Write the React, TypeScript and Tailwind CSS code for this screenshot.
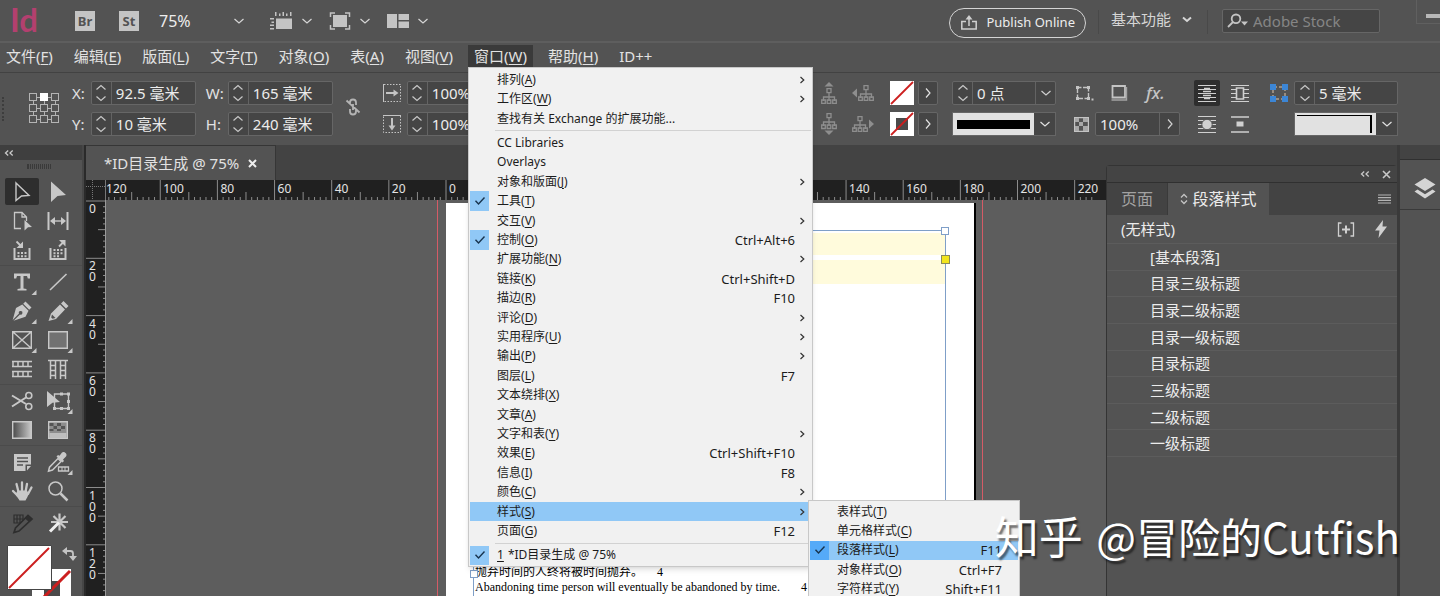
import type { ReactNode } from "react";
import clsx from "clsx";

type MenuEntry = {
  label?: string;
  hotkey?: string;
  shortcut?: string;
  arrow?: boolean;
  checked?: boolean;
  active?: boolean;
  separator?: boolean;
};

const menuBar = [
  { label: "文件", hotkey: "F" },
  { label: "编辑", hotkey: "E" },
  { label: "版面", hotkey: "L" },
  { label: "文字", hotkey: "T" },
  { label: "对象", hotkey: "O" },
  { label: "表", hotkey: "A" },
  { label: "视图", hotkey: "V" },
  { label: "窗口", hotkey: "W", open: true },
  { label: "帮助", hotkey: "H" },
  { label: "ID++" },
];

const windowMenu: MenuEntry[] = [
  { label: "排列", hotkey: "A", arrow: true },
  { label: "工作区", hotkey: "W", arrow: true },
  { label: "查找有关 Exchange 的扩展功能..." },
  { separator: true },
  { label: "CC Libraries" },
  { label: "Overlays" },
  { label: "对象和版面", hotkey: "J", arrow: true },
  { label: "工具", hotkey: "T", checked: true },
  { label: "交互", hotkey: "V", arrow: true },
  { label: "控制", hotkey: "O", shortcut: "Ctrl+Alt+6", checked: true },
  { label: "扩展功能", hotkey: "N", arrow: true },
  { label: "链接", hotkey: "K", shortcut: "Ctrl+Shift+D" },
  { label: "描边", hotkey: "R", shortcut: "F10" },
  { label: "评论", hotkey: "D", arrow: true },
  { label: "实用程序", hotkey: "U", arrow: true },
  { label: "输出", hotkey: "P", arrow: true },
  { label: "图层", hotkey: "L", shortcut: "F7" },
  { label: "文本绕排", hotkey: "X" },
  { label: "文章", hotkey: "A" },
  { label: "文字和表", hotkey: "Y", arrow: true },
  { label: "效果", hotkey: "E", shortcut: "Ctrl+Shift+F10" },
  { label: "信息", hotkey: "I", shortcut: "F8" },
  { label: "颜色", hotkey: "C", arrow: true },
  { label: "样式", hotkey: "S", arrow: true, active: true },
  { label: "页面", hotkey: "G", shortcut: "F12" },
  { separator: true },
  { label: "*ID目录生成 @ 75%", checked: true },
];

const styleMenu: MenuEntry[] = [
  { label: "表样式", hotkey: "T" },
  { label: "单元格样式", hotkey: "C" },
  { label: "段落样式", hotkey: "L", shortcut: "F11", checked: true, active: true },
  { label: "对象样式", hotkey: "O", shortcut: "Ctrl+F7" },
  { label: "字符样式", hotkey: "Y", shortcut: "Shift+F11" },
];

const paragraphStyles = [
  "[基本段落]",
  "目录三级标题",
  "目录二级标题",
  "目录一级标题",
  "目录标题",
  "三级标题",
  "二级标题",
  "一级标题",
];

/* ---------- small shared pieces ---------- */

function Chevron({ dir = "down", bold = false }: { dir?: "down" | "right"; bold?: boolean }) {
  return (
    <svg
      width="12"
      height="12"
      viewBox="0 0 12 12"
      fill="none"
      stroke="currentColor"
      strokeWidth={bold ? 2 : 1.2}
      className={clsx("shrink-0", dir === "right" && "-rotate-90")}
    >
      <path d={bold ? "M2 4.5l4 3.5 4-3.5" : "M1.500 4l4.500 4 4.500-4"} />
    </svg>
  );
}

function Hotkey({ label, hotkey }: { label?: string; hotkey?: string }) {
  return (
    <>
      {label}
      {hotkey && (
        <>
          (<span className="underline underline-offset-2">{hotkey}</span>)
        </>
      )}
    </>
  );
}

function Spinner() {
  return (
    <span className="flex w-5 shrink-0 items-center justify-center border-r border-[#636363] text-[#c8c8c8]">
      <svg width="12" height="20" viewBox="0 0 12 20" fill="none" stroke="currentColor" strokeWidth="1.2">
        <path d="M1.500 6.500l4.500-4 4.500 4M1.500 13.500l4.500 4 4.500-4" />
      </svg>
    </span>
  );
}

function Field({
  id,
  label,
  value,
  spin = true,
  drop,
  className,
}: {
  id: string;
  label: string;
  value: string;
  spin?: boolean;
  drop?: "down" | "right";
  className: string;
}) {
  return (
    <div className={clsx("flex h-6 border border-[#666] bg-[#454545] rounded-xs", className)}>
      {spin && <Spinner />}
      <input
        id={id}
        aria-label={label}
        defaultValue={value}
        className="w-0 min-w-0 flex-1 bg-transparent pl-1 text-[15px] leading-[22px] text-[#ececec] outline-none"
      />
      {drop && (
        <button
          aria-label={label + " ▾"}
          className="flex w-5 shrink-0 items-center justify-center border-l border-[#636363] text-[#d0d0d0]"
        >
          <Chevron dir={drop} />
        </button>
      )}
    </div>
  );
}

function IconButton({ label, children, className }: { label: string; children: ReactNode; className?: string }) {
  return (
    <button aria-label={label} className={clsx("flex shrink-0 items-center justify-center", className)}>
      {children}
    </button>
  );
}

function Divider() {
  return <span className="h-6 w-px shrink-0 bg-[#494949]" />;
}

/* ---------- menus ---------- */

function MenuRow({ entry, children }: { entry: MenuEntry; children?: ReactNode }) {
  if (entry.separator) {
    return (
      <li className="flex h-[5px] items-center pl-[25px]">
        <span className="h-px w-full bg-[#d2d2d2]" />
      </li>
    );
  }
  return (
    <li className={clsx("relative flex flex-1", entry.active && "bg-[#90c8f6]")}>
      <button className="flex w-full items-center pr-1 text-left text-xs text-[#1c1c1c]">
        <span
          className={clsx(
            "mr-2 flex w-[19px] items-center justify-center self-stretch",
            entry.checked && (entry.active ? "bg-[#55aaf8]" : "bg-[#90c8f6]"),
          )}
        >
          {entry.checked && (
            <svg width="12" height="10" viewBox="0 0 12 10" fill="none" stroke="#17334d" strokeWidth="1.4">
              <path d="M1.500 4.800l3 3.200L10.500 1.500" />
            </svg>
          )}
        </span>
        <span className="flex-1 leading-4 whitespace-nowrap">
          {entry.label?.startsWith("*ID") && <span className="mr-1 underline underline-offset-2">1</span>}
          <Hotkey label={entry.label} hotkey={entry.hotkey} />
        </span>
        <span className="text-[13px] leading-4">{entry.shortcut}</span>
        <span className="flex w-3 justify-end">
          {entry.arrow && (
            <svg width="8" height="10" viewBox="0 0 8 10" fill="none" stroke="#333" strokeWidth="1.200">
              <path d="M1.500 2L4.800 5 1.500 8" />
            </svg>
          )}
        </span>
      </button>
      {children}
    </li>
  );
}

function WindowMenu() {
  return (
    <ul className="absolute top-full left-0 z-20 flex h-[500px] w-[345px] flex-col border border-[#c8c8c8] bg-[#f1f1f1] p-px pt-0.5 shadow-md">
      {windowMenu.map((entry, i) => (
        <MenuRow key={i} entry={entry}>
          {entry.active && (
            <ul className="absolute -top-0.5 left-full -ml-[3px] flex h-[101px] w-[212px] flex-col border border-[#c8c8c8] bg-[#f1f1f1] p-px">
              {styleMenu.map((sub) => (
                <MenuRow key={sub.label} entry={sub} />
              ))}
            </ul>
          )}
        </MenuRow>
      ))}
    </ul>
  );
}

/* ---------- top bars ---------- */

function AppBar() {
  return (
    <header className="flex h-[43px] shrink-0 items-start border-b-2 border-[#5e5e5e] text-[#d6d6d6]">
      <div className="flex h-full items-center pl-2.5">
        <span className="w-[65px] pb-1 font-['Lato'] text-[33px] leading-9 font-bold text-[#b3406f]">Id</span>
        <button className="size-5 bg-[#c4c4c4] text-center text-[13px] leading-5 font-bold text-[#535353]">Br</button>
        <button className="ml-6 size-5 bg-[#c4c4c4] text-center text-[13px] leading-5 font-bold text-[#535353]">
          St
        </button>
        <label className="ml-5 flex items-center">
          <span className="sr-only">缩放</span>
          <select className="h-8 w-[74px] appearance-none bg-transparent text-base leading-8 text-[#ededed] outline-none">
            <option>75%</option>
          </select>
          <Chevron />
        </label>
        <span className="mx-3">
          <Divider />
        </span>
        <IconButton label="视图选项" className="gap-2">
          <svg width="24" height="20" viewBox="0 0 24 20" fill="#c4c4c4">
            <path d="M7 7.500h16V18H7z" />
            <path d="M6 1h1.500v4H6zM10 2.500h1.500V5H10zM13.500 1H15v4h-1.500zM17 2.500h1.500V5H17zM21 1h1.500v4H21zM1 7h4v1.500H1zM2.500 10.500H5V12H2.500zM1 13.500h4V15H1zM1 17h4v1.500H1z" />
          </svg>
          <Chevron />
        </IconButton>
        <IconButton label="屏幕模式" className="ml-4 gap-2">
          <svg width="22" height="20" viewBox="0 0 22 20" fill="#c4c4c4">
            <path d="M4 4h14v12H4z" />
            <path d="M1.500 6V2H6M16 2h4.500v4M20.500 14v4H16M6 18H1.500v-4" fill="none" stroke="#c4c4c4" strokeWidth="1.500" />
          </svg>
          <Chevron />
        </IconButton>
        <IconButton label="排列文档" className="ml-4 gap-2">
          <svg width="22" height="14" viewBox="0 0 22 14" fill="#c4c4c4">
            <path d="M0 0h10v14H0zM11.500 0H22v6H11.500zM11.500 7.500H22V14H11.500z" />
          </svg>
          <Chevron />
        </IconButton>
      </div>
      <div className="ml-auto flex items-start">
        <button className="mt-2 flex h-[30px] items-center gap-2 rounded-full border border-[#d4d4d4] px-2.5 text-[13px] text-[#ededed]">
          <svg width="18" height="18" viewBox="0 0 18 18" fill="none" stroke="#d0d0d0" strokeWidth="1.500">
            <path d="M6 7.500H1.800V15h14.400V7.500H12M9 12V3" />
            <path d="M5.500 5.500L9 1l3.500 4.500z" fill="#d0d0d0" stroke="none" />
          </svg>
          Publish Online
        </button>
        <span className="mx-3 mt-2.5 flex">
          <Divider />
        </span>
        <button className="mt-[7px] flex items-center gap-2.5 text-[15px] leading-6">
          基本功能
          <Chevron bold />
        </button>
        <span className="mx-3.5 mt-2.5 flex">
          <Divider />
        </span>
        <label className="mt-[9px] flex h-6 w-[158px] items-center rounded-xs border border-[#666] bg-[#454545] pl-1">
          <svg width="22" height="16" viewBox="0 0 22 16" fill="none" stroke="#c4c4c4" strokeWidth="1.800">
            <circle cx="9" cy="5.800" r="4.300" />
            <path d="M6 9L1 14" />
            <path d="M14 8.500h7l-3.500 4z" fill="#c4c4c4" stroke="none" />
          </svg>
          <span className="sr-only">Adobe Stock</span>
          <input
            placeholder="Adobe Stock"
            className="h-[22px] w-0 flex-1 bg-transparent pl-1 text-[15px] leading-[22px] outline-none placeholder:text-[#858585]"
          />
        </label>
        <button
          aria-label="最小化"
          className="ml-9 flex h-6 w-6 items-center justify-end border-b border-l border-[#606060] pt-2"
        >
          <span className="h-1 w-3.5 bg-[#b8b8b8]" />
        </button>
      </div>
    </header>
  );
}

function MenuBar() {
  return (
    <nav className="flex h-[30px] shrink-0 items-start gap-[9px] border-b border-[#424242] pt-0.5 text-[15px] leading-[22px] text-[#e2e2e2]">
      {menuBar.map((m) => (
        <div key={m.label} className="relative">
          <button className={clsx("block px-1.5 whitespace-nowrap", m.open && "bg-[#3a3a3a]")}>
            <Hotkey label={m.label} hotkey={m.hotkey} />
          </button>
          {m.open && <WindowMenu />}
        </div>
      ))}
    </nav>
  );
}

/* ---------- control strip ---------- */

const treePath = "M8 4v5M2.500 13V9h11v4M8 9v4M6 .700h4v4H6zM.700 12h3.600v3.500H.700zM6.200 12h3.600v3.500H6.200zM11.700 12h3.600v3.500h-3.600z";

function TreeIcon({ arrow }: { arrow: "up" | "down" | "left" | "right" }) {
  const vertical = arrow === "up" || arrow === "down";
  const head = {
    up: "M8 0l4.500 4.500h-9z",
    down: "M8 22l4.500-4.500h-9z",
    left: "M0 8l5-4.500v9z",
    right: "M22 8l-5-4.500v9z",
  }[arrow];
  const shift = { up: "translate(0 6)", down: "translate(0 0)", left: "translate(6 0)", right: "translate(0 0)" }[arrow];
  return (
    <svg width={vertical ? 16 : 22} height={vertical ? 22 : 16} viewBox={vertical ? "0 0 16 22" : "0 0 22 16"}>
      <path d={head} fill="#8e8e8e" />
      <path d={treePath} transform={shift} fill="none" stroke="#8e8e8e" strokeWidth="1.300" />
    </svg>
  );
}

function ReferencePoint() {
  const cells = [0, 11, 22];
  return (
    <svg width="31" height="31" viewBox="0 0 31 31" fill="none" stroke="#b4b4b4">
      <path d="M8 4.500h15M8 15.500h15M8 26.500h15M4.500 8v15M15.500 8v15M26.500 8v15" />
      {cells.map((y) =>
        cells.map((x) => (
          <rect
            key={x + "-" + y}
            x={x + 0.5}
            y={y + 0.5}
            width="7"
            height="7"
            fill={x === 11 && y === 0 ? "#fff" : "#535353"}
            stroke={x === 11 && y === 0 ? "#fff" : "#b4b4b4"}
          />
        )),
      )}
    </svg>
  );
}

function ScaleIcon({ turn = false }: { turn?: boolean }) {
  return (
    <svg width="18" height="18" viewBox="0 0 18 18" fill="none" stroke="#c4c4c4" className={clsx(turn && "rotate-90")}>
      <path d="M.5 0v18" />
      <path d="M1 .5h16.500v17H1" strokeDasharray="1.500 1.500" />
      <path d="M3 9h9" strokeWidth="2" />
      <path d="M10.500 5.500L15.500 9l-5 3.500z" fill="#c4c4c4" stroke="none" />
    </svg>
  );
}

function WrapIcon({ kind }: { kind: "none" | "box" | "shape" | "jump" }) {
  return (
    <svg width="18" height="17" viewBox="0 0 18 17" fill="none" stroke="#d0d0d0">
      {kind === "jump" ? (
        <path d="M0 1h18M0 16h18" strokeWidth="1.600" />
      ) : (
        <path d="M0 .500h18M0 4.500h18M0 8.500h18M0 12.500h18M0 16.500h18" />
      )}
      {kind === "none" && <path d="M6 3.500h6M5 6.500h8M5 10.500h8M6 13.500h6" strokeWidth="1.600" />}
      {kind === "box" && <path d="M5.500 3h7v11h-7z" fill="#535353" strokeWidth="1.600" />}
      {kind === "shape" && <circle cx="9" cy="8.500" r="5.200" fill="#d0d0d0" stroke="#535353" />}
      {kind === "jump" && <path d="M5.500 5.500h7v5h-7z" fill="#d0d0d0" stroke="none" />}
    </svg>
  );
}

function FillSwatch({ hollow = false }: { hollow?: boolean }) {
  return (
    <svg width="24" height="24" viewBox="0 0 24 24">
      <path d="M0 0h24v24H0z" fill="#fff" />
      {hollow && <path d="M6 6h12v12H6z" fill="#4a4a4a" />}
      <path d="M1 23L23 1" stroke="#cc1f1f" strokeWidth="1.800" />
    </svg>
  );
}

const pair = "grid grid-rows-[24px_24px] items-center gap-y-[7px]";

function ControlBar() {
  return (
    <section className="flex h-[72px] shrink-0 items-start pt-2 text-[15px] text-[#e2e2e2]">
      <span className="mt-4 ml-0.5 h-6 w-0.5 border-l-2 border-dotted border-[#3d3d3d]" />
      <span className="mt-3 ml-[25px]">
        <ReferencePoint />
      </span>
      <div className={clsx(pair, "ml-3 leading-6")}>
        <label htmlFor="pos-x">X:</label>
        <label htmlFor="pos-y">Y:</label>
      </div>
      <div className={clsx(pair, "ml-1.5")}>
        <Field id="pos-x" label="X" value="92.5 毫米" className="w-[105px]" />
        <Field id="pos-y" label="Y" value="10 毫米" className="w-[105px]" />
      </div>
      <div className={clsx(pair, "ml-2.5 w-[22px] leading-6")}>
        <label htmlFor="size-w">W:</label>
        <label htmlFor="size-h">H:</label>
      </div>
      <div className={pair}>
        <Field id="size-w" label="W" value="165 毫米" className="w-[105px]" />
        <Field id="size-h" label="H" value="240 毫米" className="w-[105px]" />
      </div>
      <IconButton label="约束比例" className="mt-4 ml-2.5">
        <svg width="20" height="20" viewBox="0 0 20 20" fill="none" stroke="#b4b4b4" strokeWidth="1.800">
          <path d="M7 7V5.500a3 3 0 0 1 6 0V8M7 12v2.500a3 3 0 0 0 6 0V13M10 7v6M3.500 3.500l13 12" />
        </svg>
      </IconButton>
      <div className={clsx(pair, "ml-5")}>
        <ScaleIcon />
        <ScaleIcon turn />
      </div>
      <div className={clsx(pair, "ml-1.5")}>
        <Field id="scale-x" label="X 缩放" value="100%" className="w-[84px]" />
        <Field id="scale-y" label="Y 缩放" value="100%" className="w-[84px]" />
      </div>

      <div className={clsx(pair, "ml-auto grid-cols-[18px_22px] justify-items-center gap-x-3.5")}>
        <TreeIcon arrow="up" />
        <TreeIcon arrow="left" />
        <TreeIcon arrow="down" />
        <TreeIcon arrow="right" />
      </div>
      <div className={clsx(pair, "ml-4 grid-cols-[24px_20px] gap-x-1")}>
        <FillSwatch />
        <button aria-label="填色" className="flex h-6 items-center justify-center rounded-xs border border-[#666] bg-[#454545]">
          <Chevron dir="right" />
        </button>
        <FillSwatch hollow />
        <button aria-label="描边" className="flex h-6 items-center justify-center rounded-xs border border-[#666] bg-[#454545]">
          <Chevron dir="right" />
        </button>
      </div>
      <div className={clsx(pair, "ml-3.5")}>
        <Field id="weight" label="粗细" value="0 点" drop="down" className="w-[104px]" />
        <button aria-label="描边类型" className="flex h-6 w-[104px] border border-[#666] bg-[#454545]">
          <span className="flex h-full flex-1 items-center bg-[#e1e1e1] px-1">
            <span className="h-[9px] w-full bg-black" />
          </span>
          <span className="flex h-full w-[21px] items-center justify-center">
            <Chevron />
          </span>
        </button>
      </div>
      <div className="ml-[18px] flex flex-col gap-[7px]">
        <div className="flex h-6 items-center">
          <IconButton label="角选项">
            <svg width="20" height="18" viewBox="0 0 20 18" fill="none" stroke="#c4c4c4">
              <path d="M3.500 3.500h11v11h-11z" strokeWidth="1.400" strokeDasharray="4 1.500" />
              <path d="M2 2h3v3H2zM13 2h3v3h-3zM2 13h3v3H2zM13 13h3v3h-3z" fill="#c4c4c4" stroke="none" />
              <path d="M17.500 14.500h2v2h-2z" fill="#c4c4c4" stroke="none" />
            </svg>
          </IconButton>
          <IconButton label="投影" className="ml-4">
            <svg width="18" height="18" viewBox="0 0 18 18" fill="none" stroke="#c4c4c4">
              <path d="M2.500 2h12.500v11.500H2.500z" strokeWidth="1.800" />
              <path d="M1.500 16h15V3" strokeWidth="1.400" stroke="#a4a4a4" />
            </svg>
          </IconButton>
          <button className="ml-[18px] text-[17px] leading-6 font-medium text-[#c4c4c4] italic">fx.</button>
        </div>
        <div className="flex h-6 items-center gap-1.5">
          <svg width="15" height="15" viewBox="0 0 15 15" fill="#a8a8a8">
            <path d="M.600.600h13.800v13.800H.600z" fill="none" stroke="#c4c4c4" strokeWidth="1.200" />
            <path d="M1 1h4v4H1zM9 1h5v4H9zM5 5h4v4H5zM1 9h4v5H1zM9 9h5v5H9z" />
          </svg>
          <Field id="opacity" label="不透明度" value="100%" spin={false} drop="right" className="w-[85px]" />
        </div>
      </div>
      <div className={clsx(pair, "ml-3.5 grid-cols-[26px_26px] justify-items-center gap-x-[7px]")}>
        <IconButton label="无文本绕排" className="size-[26px] rounded-xs bg-[#2e2e2e]">
          <WrapIcon kind="none" />
        </IconButton>
        <IconButton label="沿定界框绕排">
          <WrapIcon kind="box" />
        </IconButton>
        <IconButton label="沿对象形状绕排">
          <WrapIcon kind="shape" />
        </IconButton>
        <IconButton label="上下型绕排">
          <WrapIcon kind="jump" />
        </IconButton>
      </div>
      <svg width="18" height="18" viewBox="0 0 18 18" className="mt-[3px] ml-[17px] shrink-0">
        <path d="M3 3h12v12H3z" fill="none" stroke="#b0a090" strokeWidth="1.500" strokeDasharray="4 2" />
        <path d="M0 0h6v6H0zM12 0h6v6h-6zM0 12h6v6H0zM12 12h6v6h-6z" fill="#3c86d6" />
      </svg>
      <div className={clsx(pair, "mr-[42px] ml-1.5")}>
        <Field id="corner" label="转角大小" value="5 毫米" className="w-[104px]" />
        <button aria-label="转角形状" className="flex h-6 w-[104px] border border-[#666] bg-[#454545]">
          <span className="flex h-full flex-1 items-end bg-[#e1e1e1] pr-1 pb-0.5 pl-0.5">
            <span className="h-[18px] w-full border-t border-r-2 border-black" />
          </span>
          <span className="flex h-full w-[21px] items-center justify-center">
            <Chevron />
          </span>
        </button>
      </div>
    </section>
  );
}

/* ---------- toolbox ---------- */

const corner = "M24.500 18v5h-5z";

const toolGroups: { name: string; icon: ReactNode; flyout?: boolean; selected?: boolean }[][] = [
  [
    { name: "选择工具", selected: true, icon: <path d="M6 3l13 12.500-7.500.500L6 20.500z" fill="none" stroke="#c8c8c8" strokeWidth="1.400" /> },
    { name: "直接选择工具", icon: <path d="M5 1.500l15 13.500-8.500 1L5 22z" /> },
    {
      name: "页面工具",
      icon: (
        <>
          <path d="M11 19.500H4.500v-16h7.500l4.500 4.500v4M12 3.500V8h4.500" fill="none" stroke="#c8c8c8" strokeWidth="1.300" />
          <path d="M14.500 11l7.500 7-4 .300-3.500 3.200z" />
        </>
      ),
    },
    {
      name: "间隙工具",
      icon: (
        <>
          <path d="M2.500 3v18M21.500 3v18" stroke="#c8c8c8" strokeWidth="2" />
          <path d="M6 12h12" stroke="#c8c8c8" strokeWidth="1.400" />
          <path d="M9 8l-5 4 5 4zM15 8l5 4-5 4z" />
        </>
      ),
    },
    {
      name: "内容收集器工具",
      icon: (
        <>
          <path d="M4.500 10v11h15V10" fill="none" stroke="#c8c8c8" strokeWidth="2" />
          <path d="M7.500 14h2v2h-2zM11 14h2v2h-2zM14.500 14h2v2h-2zM7.500 17.300h2v2h-2zM11 17.300h2v2h-2zM14.500 17.300h2v2h-2zM13 3.500V10H6.500z" />
          <path d="M6.500 3.500l4 4" stroke="#c8c8c8" strokeWidth="1.800" />
        </>
      ),
    },
    {
      name: "内容置入器工具",
      icon: (
        <>
          <path d="M4.500 10v11h15V10" fill="none" stroke="#c8c8c8" strokeWidth="2" />
          <path d="M7.500 11h2v2h-2zM11 11h2v2h-2zM14.500 11h2v2h-2zM7.500 14.300h2v2h-2zM11 14.300h2v2h-2zM14.500 14.300h2v2h-2zM7.500 17.300h2v2h-2zM11 17.300h2v2h-2zM13 2h6.500v6.500z" />
          <path d="M13 8.500l4-4" stroke="#c8c8c8" strokeWidth="1.800" />
        </>
      ),
    },
  ],
  [
    { name: "文字工具", flyout: true, icon: <path d="M4 3.500h16v5h-2.200L17 6h-3.500v12.500l3 .500v1.500h-9V19l3-.500V6H7l-.800 2.500H4z" /> },
    { name: "直线工具", icon: <path d="M4 20L20.500 4" stroke="#c8c8c8" strokeWidth="1.600" /> },
    {
      name: "钢笔工具",
      flyout: true,
      icon: (
        <path d="M15.500 2.500l6 6-2.300 2.300-6-6zM12.300 5.500l6.200 6.200-3 6L3.500 21.800 10 15.500a1.800 1.800 0 1 0-1-1L2.700 21 6 9z" />
      ),
    },
    {
      name: "铅笔工具",
      flyout: true,
      icon: (
        <>
          <path d="M17.500 2l5 5-2.500 2.500-5-5zM14 5.500l5 5-9 9.500-7.500 2L5 14.500z" />
          <path d="M6 15.500l3.500 3.500-3 .800-1.300-1.300z" fill="#535353" />
        </>
      ),
    },
    {
      name: "矩形框架工具",
      flyout: true,
      icon: <path d="M2.700 3.700h18.600v16.600H2.700zM3 4l18 16M21 4L3 20" fill="none" stroke="#c8c8c8" strokeWidth="1.400" />,
    },
    {
      name: "矩形工具",
      flyout: true,
      icon: <path d="M2.700 3.700h18.600v16.600H2.700z" fill="#727272" stroke="#c8c8c8" strokeWidth="1.400" />,
    },
    {
      name: "水平网格工具",
      icon: (
        <path
          d="M2 4.500h20M2 9.500h20M2 14.500h20M2 19.500h20M3 4v6M8 4v6M13 4v6M18 4v6M3 14v6M8 14v6M13 14v6M18 14v6"
          fill="none"
          stroke="#c8c8c8"
          strokeWidth="1.500"
        />
      ),
    },
    {
      name: "垂直网格工具",
      icon: (
        <path
          d="M2 3.500h20M4.500 3v19M9.500 3v19M14.500 3v19M19.500 3v19M4 8.500h6M4 13.500h6M4 18.500h6M14 8.500h6M14 13.500h6M14 18.500h6"
          fill="none"
          stroke="#c8c8c8"
          strokeWidth="1.500"
        />
      ),
    },
  ],
  [
    {
      name: "剪刀工具",
      icon: (
        <>
          <path d="M2 6.500l14 8.500M2 17.500l14-9" stroke="#c8c8c8" strokeWidth="2" />
          <circle cx="18.800" cy="6.500" r="3" fill="none" stroke="#c8c8c8" strokeWidth="1.600" />
          <circle cx="18.800" cy="17.500" r="3" fill="none" stroke="#c8c8c8" strokeWidth="1.600" />
        </>
      ),
    },
    {
      name: "自由变换工具",
      flyout: true,
      icon: (
        <>
          <path d="M8.500 5h14v14.500h-14z" fill="none" stroke="#c8c8c8" strokeWidth="1.400" />
          <path d="M7 18h3v3H7zM21 18h3v3h-3zM21 3.500h3v3h-3zM14 18h3v3h-3zM21 11h3v3h-3zM14 3.500h3v3h-3zM1 2l13 11-7.500.800L1 18z" />
        </>
      ),
    },
    { name: "渐变色板工具", icon: <path d="M2.700 3.700h18.600v16.600H2.700z" fill="url(#ramp)" stroke="#c8c8c8" strokeWidth="1.400" /> },
    {
      name: "渐变羽化工具",
      icon: (
        <>
          <path d="M2.700 3.700h18.600v16.600H2.700z" fill="#8d8d8d" stroke="#c8c8c8" strokeWidth="1.400" />
          <path d="M3.500 5h4v3h-4zM11 5h4v3h-4zM7.500 8h3.500v3H7.500zM15 8h4v3h-4zM3.500 11h4v2h-4zM11 11h4v2h-4z" fill="#555" />
          <path d="M3.500 15h17v5h-17z" fill="#bdbdbd" />
        </>
      ),
    },
  ],
  [
    {
      name: "附注工具",
      icon: (
        <>
          <path d="M4 4h17v10.500h-5.500V21H4zM17 16h4l-4 4.500z" />
          <path d="M7 8h11M7 11.500h11M7 15h6" stroke="#535353" strokeWidth="1.400" />
        </>
      ),
    },
    {
      name: "颜色主题工具",
      flyout: true,
      icon: (
        <>
          <path d="M16 2.500c2-2 6 1.500 4 4l-3 3 1 1.500-1.500 1.500-6-6L12 5l1.500.800z" />
          <path d="M12 8.500l3 3L6.500 20l-4 1.200 1-4z" fill="none" stroke="#c8c8c8" strokeWidth="1.500" />
          <path d="M12.500 17h10v4h-10z" fill="#535353" stroke="#c8c8c8" strokeWidth="1.300" />
          <path d="M16 17v4M19 17v4" stroke="#c8c8c8" />
        </>
      ),
    },
    {
      name: "抓手工具",
      icon: (
        <>
          <path
            d="M8.500 13L6.500 5M12 12V3.500M15.500 13l1.500-8M18 15l3.500-6.500M7.500 16.500L3 12"
            stroke="#c8c8c8"
            strokeWidth="2.300"
            strokeLinecap="round"
          />
          <path d="M7.500 11.500h9.500l1.500 3c-.500 3.500-2 5-3 7H9.500c-1-2-3-4-4-6z" />
        </>
      ),
    },
    {
      name: "缩放显示工具",
      icon: (
        <>
          <circle cx="9.500" cy="9.500" r="6.500" fill="none" stroke="#c8c8c8" strokeWidth="1.500" />
          <path d="M14.500 14.500l7 7" stroke="#c8c8c8" strokeWidth="2.500" />
        </>
      ),
    },
  ],
  [
    {
      name: "网格铅笔",
      icon: (
        <>
          <path d="M4 4h9v8H4zM4 8h9M7 4v8M10 4v8" fill="none" stroke="#2e2e2e" strokeWidth="1.200" />
          <path d="M18 4.500l4 3.500L9 20l-5 1.500L5.500 17z" fill="#535353" stroke="#2e2e2e" strokeWidth="1.700" />
          <path d="M18 4.500l4 3.500-3 3-4-3.500z" fill="#2e2e2e" />
        </>
      ),
    },
    {
      name: "魔棒",
      icon: (
        <>
          <path
            d="M13.500 2.500v17M5 11h17M7.500 5l12 12M19.500 5l-8 8"
            stroke="#c8c8c8"
            strokeWidth="2.200"
          />
          <path d="M13 11.500L4 20.500" stroke="#f0f0f0" strokeWidth="3" />
        </>
      ),
    },
  ],
];

function Toolbox() {
  return (
    <aside className="flex w-[86px] shrink-0 flex-col border-r-2 border-[#2a2a2a] bg-[#464646] pr-0.5">
      <svg width="0" height="0" className="absolute">
        <defs>
          <linearGradient id="ramp">
            <stop offset="0" stopColor="#4a4a4a" />
            <stop offset="1" stopColor="#c8c8c8" />
          </linearGradient>
        </defs>
      </svg>
      <div className="flex h-[15px] shrink-0 items-center bg-[#3f3f3f] pl-1">
        <DoubleChevron />
      </div>
      <div className="flex flex-1 flex-col bg-[#535353]">
        <div className="mt-1 mb-[7px] ml-[27px] h-[5px] w-6 shrink-0 border-l border-[#3a3a3a] bg-[repeating-linear-gradient(90deg,#3a3a3a_0_1px,transparent_1px_2px)]" />
        {toolGroups.map((group, g) => (
          <div
            key={g}
            className="grid shrink-0 grid-cols-[36px_36px] border-b border-[#4b4b4b] py-px pl-1 last-of-type:border-0"
          >
            {group.map((tool) => (
              <button
                key={tool.name}
                aria-label={tool.name}
                className={clsx("mx-px my-px flex h-[27px] items-center justify-center rounded-xs", tool.selected && "bg-[#2e2e2e]")}
              >
                <svg width="26" height="24" viewBox="-1 0 26 24" fill="#c8c8c8" className="overflow-visible">
                  {tool.icon}
                  {tool.flyout && <path d={corner} transform="translate(2 2)" />}
                </svg>
              </button>
            ))}
          </div>
        ))}
        <svg width="80" height="56" viewBox="0 0 80 56" className="mt-[5px] shrink-0">
          <path d="M32 26h39v40H32z" fill="#fff" />
          <path d="M44 38h16v20H44z" fill="#4a4a4a" />
          <path d="M34 64L70 28" stroke="#cc1f1f" strokeWidth="3" />
          <path d="M7.500 2.500h44v44h-44z" fill="#fff" stroke="#454545" />
          <path d="M9 45L49 5" stroke="#cc1f1f" strokeWidth="2" />
          <path d="M66 8h4.500q2.500 0 2.500 2.500V15" fill="none" stroke="#c4c4c4" strokeWidth="1.800" />
          <path d="M67 4v8l-5-4zM69 13h8l-4 5z" fill="#c4c4c4" />
        </svg>
      </div>
    </aside>
  );
}

function DoubleChevron() {
  return (
    <svg width="10" height="8" viewBox="0 0 10 8" fill="none" stroke="#c8c8c8" strokeWidth="1.300">
      <path d="M4.200 1.500L1.500 4l2.700 2.500M8.700 1.500L6 4l2.700 2.500" />
    </svg>
  );
}

/* ---------- document ---------- */

// 2 mm at 75 % zoom
const STEP_X = 5.715;
const STEP_Y = 5.73;
const ORIGIN_X = 340;
const ORIGIN_Y = 1;

function tickLength(mm: number) {
  if (mm % 20 === 0) return 20;
  return mm % 10 === 0 ? 8 : 3;
}

function HorizontalRuler() {
  const marks = Array.from({ length: 174 }, (_, i) => (i - 60) * 2);
  return (
    <svg height="20" className="h-5 min-w-0 flex-1 bg-[#202020]">
      {marks.map((mm) => {
        const x = ORIGIN_X + (mm / 2) * STEP_X;
        return (
          <g key={mm}>
            <path d={`M${x} 20v-${tickLength(mm)}`} stroke="#8c8c8c" />
            {mm % 20 === 0 && (
              <text x={x + 3} y="13" fontSize="12" fill="#e4e4e4">
                {Math.abs(mm)}
              </text>
            )}
          </g>
        );
      })}
    </svg>
  );
}

function VerticalRuler() {
  const marks = Array.from({ length: 70 }, (_, i) => i * 2);
  return (
    <svg width="20" className="h-full w-5 shrink-0 border-r border-[#9a9a9a] bg-[#202020]">
      {marks.map((mm) => {
        const y = ORIGIN_Y + (mm / 2) * STEP_Y;
        return (
          <g key={mm}>
            <path d={`M20 ${y}h-${tickLength(mm)}`} stroke="#8c8c8c" />
            {mm % 20 === 0 && (
              <text fontSize="12" fill="#e4e4e4">
                {String(mm)
                  .split("")
                  .map((digit, i) => (
                    <tspan key={i} x="3" y={y + 12 + i * 11}>
                      {digit}
                    </tspan>
                  ))}
              </text>
            )}
          </g>
        );
      })}
    </svg>
  );
}

function Canvas() {
  return (
    <div className="relative min-w-0 flex-1 overflow-hidden bg-[#5d5d5d]">
      <span className="absolute inset-y-0 left-[331px] w-px bg-[#d45b66]" />
      <span className="absolute inset-y-0 left-[876px] w-px bg-[#d45b66]" />
      <div className="absolute top-[3px] bottom-0 left-[340px] w-[530px] border-r-2 border-black bg-white">
        <div className="absolute top-[27px] bottom-0 left-[27px] w-[473px] border border-b-0 border-[#7f9fc8]">
          <div className="mt-0.5 h-[22px] bg-[#fffbdc]" />
          <div className="mt-[5px] h-6 bg-[#fffbdc]" />
          <span className="absolute -top-1 -right-1 size-2 border border-[#7f9fc8] bg-white" />
          <span className="absolute top-6 -right-[5px] size-[9px] border border-[#8a8a5a] bg-[#f2e51c]" />
          <div className="absolute top-[334px] left-px font-['Liberation_Serif','Noto_Sans_CJK_SC',serif] text-xs leading-[15px] whitespace-nowrap text-black">
            <p>
              抛弃时间的人终将被时间抛弃。<span className="ml-3.5">4</span>
            </p>
            <p className="flex w-[332px] justify-between">
              <span>Abandoning time person will eventually be abandoned by time.</span>
              <span>4</span>
            </p>
          </div>
          <span className="absolute top-[339px] -left-1 size-2 border border-[#7f9fc8] bg-white" />
        </div>
      </div>
    </div>
  );
}

function DocumentWindow() {
  return (
    <main className="flex min-w-0 flex-1 flex-col">
      <div className="flex h-[35px] shrink-0 bg-[#434343]">
        <div className="flex w-[190px] items-center justify-between border-t border-r border-[#363636] bg-[#535353] px-[18px] text-[15px] text-[#e2e2e2]">
          <span className="whitespace-nowrap">*ID目录生成 @ 75%</span>
          <button aria-label="关闭">
            <svg width="9" height="9" viewBox="0 0 9 9" stroke="#ededed" strokeWidth="2">
              <path d="M1 1l7 7M8 1L1 8" />
            </svg>
          </button>
        </div>
      </div>
      <div className="flex h-5 shrink-0">
        <svg width="20" height="20" viewBox="0 0 20 20" className="shrink-0 bg-[#202020]">
          <path d="M6.500 0v20M0 6.500h20" stroke="#777" strokeDasharray="1 1" />
          <path d="M19.500 0v20" stroke="#777" />
        </svg>
        <HorizontalRuler />
      </div>
      <div className="flex min-h-0 flex-1">
        <VerticalRuler />
        <Canvas />
      </div>
    </main>
  );
}

/* ---------- right side ---------- */

function StylesPanel() {
  return (
    <aside className="flex w-[291px] shrink-0 flex-col bg-[#434343] pt-5 text-[15px] text-[#ececec]">
      <div className="flex flex-1 flex-col rounded-t-sm border-t border-l border-[#343434] bg-[#535353]">
        <div className="flex h-4 items-center justify-end gap-3 bg-[#444] pr-1.5">
          <DoubleChevron />
          <button aria-label="关闭面板">
            <svg width="9" height="9" viewBox="0 0 9 9" stroke="#c8c8c8" strokeWidth="1.600" className="block">
              <path d="M1 1l7 7M8 1L1 8" />
            </svg>
          </button>
        </div>
        <div className="flex h-[33px] items-stretch border-t border-[#303030] bg-[#434343] text-base">
          <button className="w-[61px] border-r border-[#3a3a3a] text-[#a2a2a2]">页面</button>
          <button className="flex w-[101px] items-center justify-center gap-1 bg-[#535353]">
            <svg width="8" height="12" viewBox="0 0 8 12" fill="none" stroke="#c4c4c4" strokeWidth="1.300">
              <path d="M1 4.500L4 1.500l3 3M1 7.500l3 3 3-3" />
            </svg>
            段落样式
          </button>
          <button aria-label="面板菜单" className="mr-1.5 ml-auto">
            <svg width="13" height="10" viewBox="0 0 13 10" stroke="#b4b4b4" strokeWidth="1.200">
              <path d="M0 1h13M0 3.700h13M0 6.300h13M0 9h13" />
            </svg>
          </button>
        </div>
        <div className="flex h-[29px] items-center border-b border-[#5c5c5c] pr-2.5 pl-3.5">
          <span className="flex-1">(无样式)</span>
          <IconButton label="创建新样式">
            <svg width="18" height="15" viewBox="0 0 18 15" fill="none" stroke="#d0d0d0">
              <path d="M4.500 1H1.500v13h3M13.500 1h3v13h-3" strokeWidth="1.300" />
              <path d="M5 7.500h8M9 3.500v8" strokeWidth="2" />
            </svg>
          </IconButton>
          <IconButton label="清除优先选项" className="ml-5">
            <svg width="12" height="18" viewBox="0 0 12 18" fill="#d0d0d0">
              <path d="M8 0L0 10.500h4.500L3.500 18 12 6.500H7.500z" />
            </svg>
          </IconButton>
        </div>
        <ul className="flex h-[213px] flex-col">
          {paragraphStyles.map((name) => (
            <li key={name} className="flex flex-1 border-b border-[#5c5c5c]">
              <button className="flex w-full items-center pl-[43px] text-left leading-5">{name}</button>
            </li>
          ))}
        </ul>
      </div>
    </aside>
  );
}

function Dock() {
  return (
    <aside className="flex w-[43px] shrink-0 flex-col border-l-3 border-[#3a3a3a] bg-[#535353]">
      <div className="h-[15px] border-b border-[#303030] bg-[#434343]" />
      <button aria-label="图层" className="flex h-[50px] items-center justify-center border-b border-[#3a3a3a] pt-2 pl-2.5">
        <svg width="22" height="22" viewBox="0 0 22 22" fill="#d4d4d4">
          <path d="M11 0l10.500 6.500L11 13 .500 6.500z" />
          <path d="M3.500 11.500l7.500 4.700 7.500-4.700 3 2L11 20.500.500 13.500z" />
        </svg>
      </button>
    </aside>
  );
}

export default function App() {
  return (
    <div className="relative flex h-screen flex-col overflow-hidden bg-[#535353] font-['Noto_Sans','Noto_Sans_CJK_SC',sans-serif]">
      <AppBar />
      <MenuBar />
      <ControlBar />
      <div className="flex min-h-0 flex-1">
        <Toolbox />
        <DocumentWindow />
        <StylesPanel />
        <Dock />
      </div>
      <p className="pointer-events-none absolute right-10 bottom-8 z-30 font-['Noto_Sans_CJK_SC',sans-serif] text-[42px] leading-[56px] whitespace-nowrap text-white [text-shadow:2px_3px_2px_rgba(0,0,0,0.55)]">
        <span className="mr-1 text-[44px]">知乎</span> @冒险的Cutfish
      </p>
    </div>
  );
}
